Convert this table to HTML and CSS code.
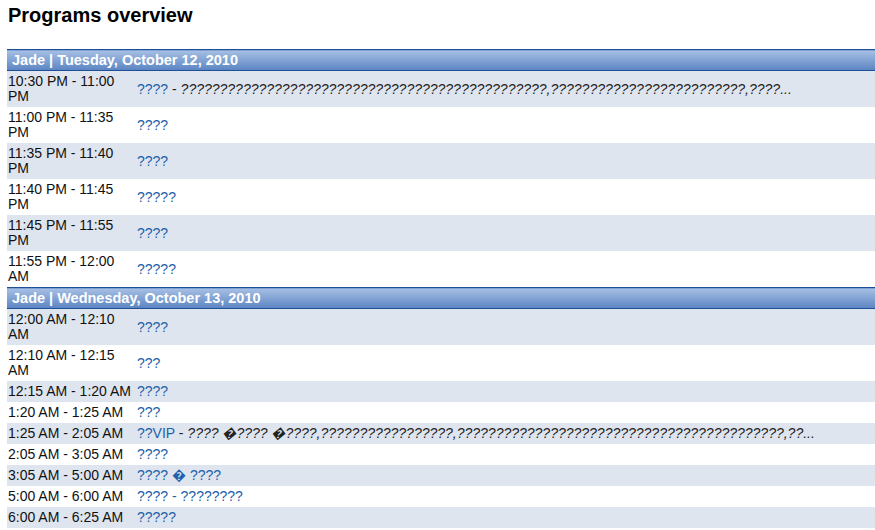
FILE: index.html
```html
<!DOCTYPE html>
<html lang="en">
<head>
    <meta charset="UTF-8">
    <title>Programs overview</title>
    <link rel="stylesheet" href="styles.css">
</head>
<body>
    <h1>Programs overview</h1>

    <table class="schedule">
        <tr class="day"><th colspan="2">Jade | Tuesday, October 12, 2010</th></tr>
        <tr class="alt">
            <td class="time">10:30 PM - 11:00 PM</td>
            <td><a href="#">????</a> - <span class="desc">???????????????????????????????????????????????,?????????????????????????,????...</span></td>
        </tr>
        <tr>
            <td class="time">11:00 PM - 11:35 PM</td>
            <td><a href="#">????</a></td>
        </tr>
        <tr class="alt">
            <td class="time">11:35 PM - 11:40 PM</td>
            <td><a href="#">????</a></td>
        </tr>
        <tr>
            <td class="time">11:40 PM - 11:45 PM</td>
            <td><a href="#">?????</a></td>
        </tr>
        <tr class="alt">
            <td class="time">11:45 PM - 11:55 PM</td>
            <td><a href="#">????</a></td>
        </tr>
        <tr>
            <td class="time">11:55 PM - 12:00 AM</td>
            <td><a href="#">?????</a></td>
        </tr>

        <tr class="day"><th colspan="2">Jade | Wednesday, October 13, 2010</th></tr>
        <tr class="alt">
            <td class="time">12:00 AM - 12:10 AM</td>
            <td><a href="#">????</a></td>
        </tr>
        <tr>
            <td class="time">12:10 AM - 12:15 AM</td>
            <td><a href="#">???</a></td>
        </tr>
        <tr class="alt">
            <td class="time">12:15 AM - 1:20 AM</td>
            <td><a href="#">????</a></td>
        </tr>
        <tr>
            <td class="time">1:20 AM - 1:25 AM</td>
            <td><a href="#">???</a></td>
        </tr>
        <tr class="alt">
            <td class="time">1:25 AM - 2:05 AM</td>
            <td><a href="#">??VIP</a> - <span class="desc">???? &#xFFFD;???? &#xFFFD;????,?????????????????,??????????????????????????????????????????,??...</span></td>
        </tr>
        <tr>
            <td class="time">2:05 AM - 3:05 AM</td>
            <td><a href="#">????</a></td>
        </tr>
        <tr class="alt">
            <td class="time">3:05 AM - 5:00 AM</td>
            <td><a href="#">???? &#xFFFD; ????</a></td>
        </tr>
        <tr>
            <td class="time">5:00 AM - 6:00 AM</td>
            <td><a href="#">???? - ????????</a></td>
        </tr>
        <tr class="alt">
            <td class="time">6:00 AM - 6:25 AM</td>
            <td><a href="#">?????</a></td>
        </tr>
    </table>
</body>
</html>
```

FILE: styles.css
```css
body {
    font-family: 'Liberation Sans', Arial, sans-serif;
    font-size: 14px;
    color: #222;
    margin: 0;
    padding: 0 0 0 7px;
    background: #fff;
}
h1 {
    font-size: 20px;
    margin: 4px 0 0 1px;
    line-height: 23px;
    color: #000;
}
.schedule {
    width: 100%;
    margin-top: 22px;
    border-collapse: collapse;
    line-height: 15px;
}
.schedule th {
    text-align: left;
    color: #fff;
    font-size: 14.5px;
    font-weight: bold;
    padding: 3px 5px 2px;
    height: 15px;
    border-top: 1px solid #1d5096;
    border-bottom: 1px solid #1d5096;
    background: linear-gradient(to bottom, #a7c0e4, #5a84c2);
}
.schedule td {
    padding: 3px 0 3px 1px;
    vertical-align: middle;
    white-space: nowrap;
}
.schedule td.time {
    width: 128px;
    white-space: normal;
    color: #111;
}
.schedule tr.alt td {
    background-color: #dfe5ef;
}
.schedule a {
    color: #2261ab;
    text-decoration: none;
}
.desc {
    font-style: italic;
}
```
